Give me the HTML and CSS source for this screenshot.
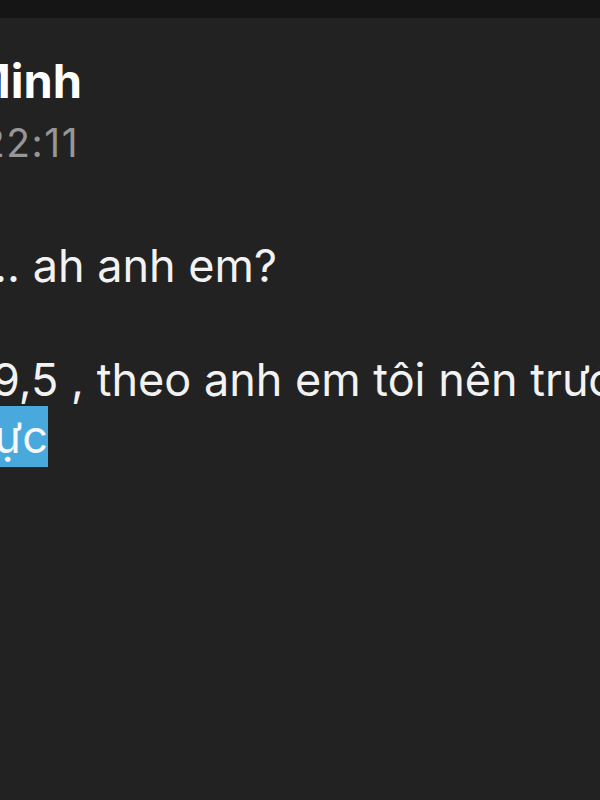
FILE: index.html
```html
<!DOCTYPE html>
<html lang="vi">
<head>
<meta charset="utf-8">
<link rel="stylesheet" href="styles.css">
</head>
<body>
<div class="topbar"></div>
<main class="chat">
  <header class="sender">
    <div class="name">Minh</div>
    <div class="time">22:11</div>
  </header>
  <div class="message">
    <p class="line l1">À.. ah anh em?</p>
    <p class="line l2">9,5 , theo anh em tôi nên trước</p>
    <p class="line l3">th<span class="hl">ực </span></p>
  </div>
</main>
</body>
</html>
```
FILE: styles.css
```css
html, body {
  margin: 0;
  padding: 0;
  width: 600px;
  height: 800px;
  overflow: hidden;
  background: #222222;
  font-family: Inter, "Noto Sans", sans-serif;
  color: #f2f2f2;
}
.topbar {
  height: 18px;
  background: #151515;
}
.chat {
  margin-left: -33px;
  white-space: nowrap;
}
.sender {
  padding-top: 38px;
}
.name {
  font-weight: 700;
  font-size: 47px;
  line-height: 50px;
  color: #ffffff;
}
.time {
  font-size: 39px;
  line-height: 50px;
  margin-top: 12px;
  letter-spacing: 1.5px;
  text-indent: 14px;
  color: #979797;
}
.message {
  margin-top: 69px;
  font-size: 45px;
  line-height: 57px;
}
.line {
  margin: 0;
}
.l1 {
  text-indent: -4px;
}
.l2 {
  margin-top: 57px;
  text-indent: 25px;
}
.l3 {
  text-indent: -14px;
}
.hl {
  background: #4aa9dc;
  color: #f4f8fb;
  padding: 3px 0;
}
```
